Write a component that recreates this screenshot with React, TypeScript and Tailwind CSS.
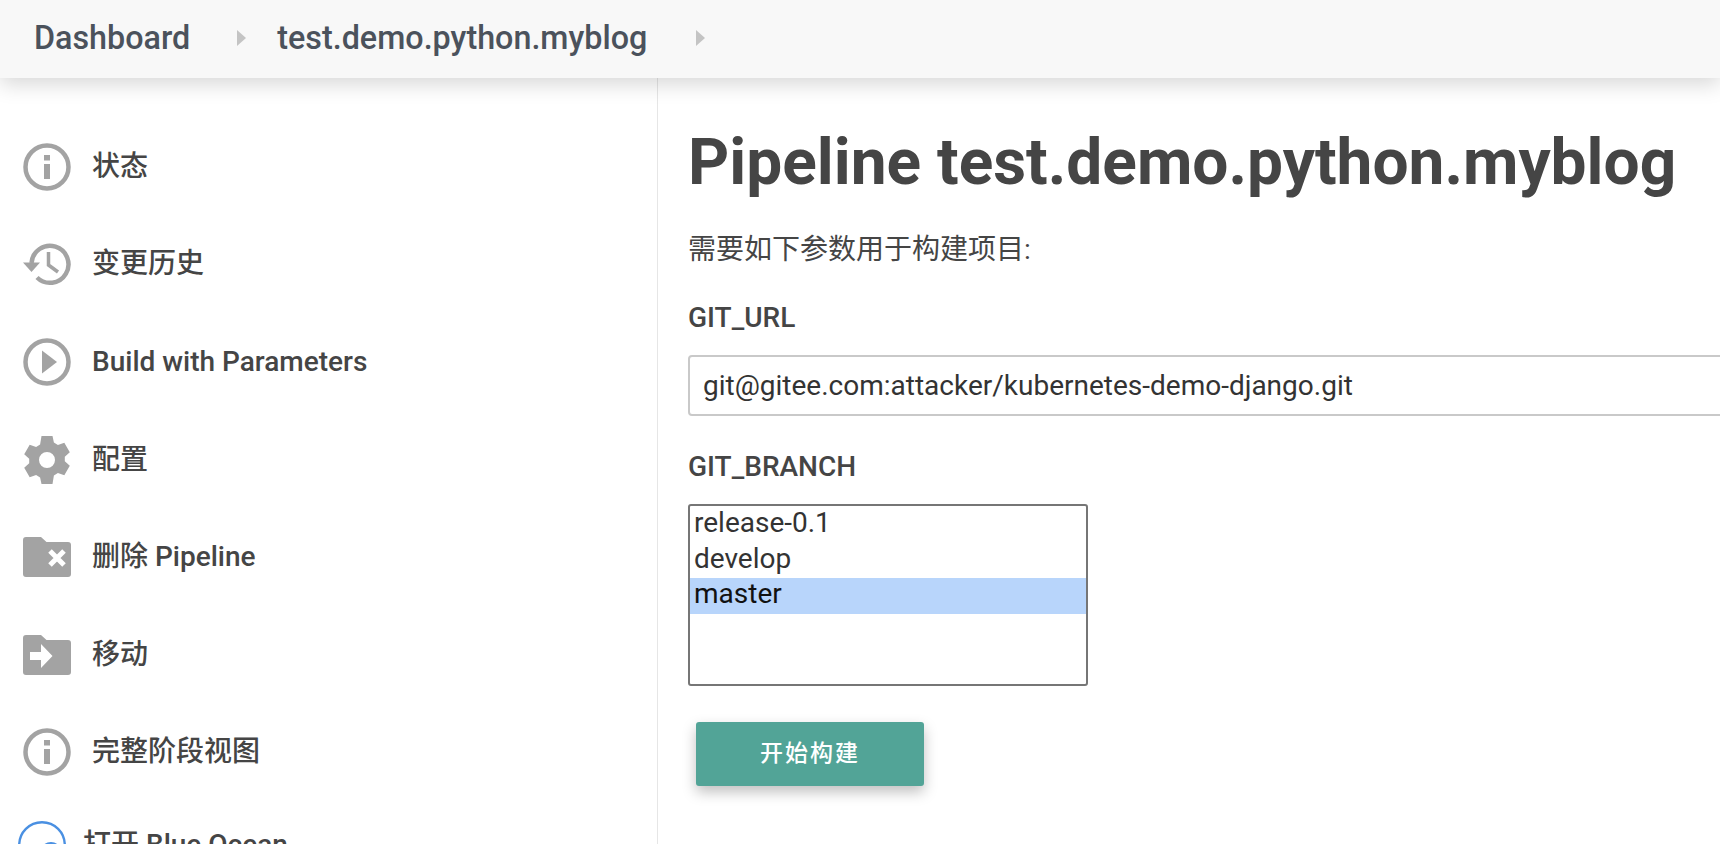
const FONT = "font-['Roboto','Noto_Sans_CJK_SC',sans-serif]";

function InfoIcon() {
  return (
    <svg viewBox="0 0 48 48" className="h-12 w-12 shrink-0">
      <circle cx="24" cy="24" r="21.500" fill="none" stroke="#a3a3a3" strokeWidth="4.500" />
      <rect x="21" y="12" width="6" height="5.500" fill="#a3a3a3" />
      <rect x="21" y="21" width="6" height="15" fill="#a3a3a3" />
    </svg>
  );
}

function HistoryIcon() {
  return (
    <svg viewBox="0 0 48 48" className="h-12 w-12 shrink-0">
      <path d="M8.500 23A18.500 18.500 0 1 1 14 37.500" fill="none" stroke="#a3a3a3" strokeWidth="4.500" />
      <path d="M0 22.500h17L8.500 32z" fill="#a3a3a3" />
      <path d="M25.500 12v13l9.500 7" fill="none" stroke="#a3a3a3" strokeWidth="3.500" />
    </svg>
  );
}

function PlayIcon() {
  return (
    <svg viewBox="0 0 48 48" className="h-12 w-12 shrink-0">
      <circle cx="24" cy="24" r="21.500" fill="none" stroke="#a3a3a3" strokeWidth="4.500" />
      <path d="M19 12.500 34 24 19 35.500z" fill="#a3a3a3" />
    </svg>
  );
}

function GearIcon() {
  return (
    <svg viewBox="0 0 48 48" className="h-12 w-12 shrink-0">
      <path
        fillRule="evenodd"
        d="M18.500 0h11l1.400 6.600 4 2.300 6.400-2.100 5.500 9.500-5 4.500v4.400l5 4.500-5.500 9.500-6.400-2.100-4 2.300L29.500 48h-11l-1.400-6.600-4-2.300-6.400 2.100L1.200 31.700l5-4.500v-4.400l-5-4.500L6.700 8.800l6.400 2.100 4-2.300zM24 16a8 8 0 1 0 0 16 8 8 0 0 0 0-16z"
        fill="#a3a3a3"
      />
    </svg>
  );
}

function FolderIcon({ mark }: { mark: "x" | "arrow" }) {
  return (
    <svg viewBox="0 0 48 40" className="h-10 w-12 shrink-0">
      <path
        d="M3 0h15l5.500 5H45a3 3 0 0 1 3 3v29a3 3 0 0 1-3 3H3a3 3 0 0 1-3-3V3a3 3 0 0 1 3-3z"
        fill="#a3a3a3"
      />
      {mark === "x" ? (
        <path d="M27 14l14 14M41 14 27 28" stroke="#fff" strokeWidth="5" fill="none" />
      ) : (
        <path d="M7 17h11v-8l11.500 12L18 33v-8H7z" fill="#fff" />
      )}
    </svg>
  );
}

function OceanIcon() {
  return (
    <svg viewBox="0 0 48 48" className="h-12 w-12 shrink-0">
      <circle cx="24" cy="24" r="22.800" fill="none" stroke="#4a90e2" strokeWidth="2.400" />
      <path d="M20 36c1-9 6-15 13-15s11 6 11 15z" fill="#4a90e2" />
    </svg>
  );
}

function Crumb({ label }: { label: string }) {
  return <span className="text-[32.300px] leading-none font-medium text-[#4b525c]">{label}</span>;
}

function Caret() {
  return (
    <svg viewBox="0 0 9 16" className="h-4 w-[9px]">
      <path d="M0 0l9 8-9 8z" fill="#c4c4c4" />
    </svg>
  );
}

function NavItem({ icon, label }: { icon: React.ReactNode; label: string }) {
  return (
    <li className="flex h-[97.600px] items-center gap-[21px] pl-[23px]">
      <span className="flex w-12 items-center justify-center">{icon}</span>
      <span className="text-[28px] leading-none font-medium text-[#454545]">{label}</span>
    </li>
  );
}

const branches = ["release-0.1", "develop", "master"];

export default function App() {
  return (
    <div className={`flex h-screen flex-col overflow-hidden bg-white ${FONT}`}>
      <header className="z-10 flex h-[78px] shrink-0 items-center bg-[#f8f8f8] pb-[2px] pl-[34px] shadow-[0_6px_20px_rgba(0,0,0,0.16)]">
        <Crumb label="Dashboard" />
        <div className="ml-[47px] mr-[31px]">
          <Caret />
        </div>
        <Crumb label="test.demo.python.myblog" />
        <div className="ml-[49px]">
          <Caret />
        </div>
      </header>

      <div className="flex min-h-0 flex-1">
        <aside className="w-[658px] shrink-0 border-r border-[#e6e6e6] pt-[40px]">
          <ul>
            <NavItem icon={<InfoIcon />} label="状态" />
            <NavItem icon={<HistoryIcon />} label="变更历史" />
            <NavItem icon={<PlayIcon />} label="Build with Parameters" />
            <NavItem icon={<GearIcon />} label="配置" />
            <NavItem icon={<FolderIcon mark="x" />} label="删除 Pipeline" />
            <NavItem icon={<FolderIcon mark="arrow" />} label="移动" />
            <NavItem icon={<InfoIcon />} label="完整阶段视图" />
            <li className="-ml-[5px] -mt-[5px] flex h-[97.600px] items-center gap-[17px] pl-[23px]">
              <OceanIcon />
              <span className="text-[28px] leading-none font-medium text-[#454545]">打开 Blue Ocean</span>
            </li>
          </ul>
        </aside>

        <main className="min-w-0 flex-1 pl-[30px] pt-[46px] text-[#454545]">
          <h1 className="text-[64px] leading-[78px] font-bold whitespace-nowrap">Pipeline test.demo.python.myblog</h1>
          <p className="mt-[31px] text-[28px] leading-[34px]">需要如下参数用于构建项目:</p>
          <label className="mt-[34px] block text-[28px] leading-[34px] font-medium">GIT_URL</label>
          <div className="mt-[20px] flex h-[61px] w-[1300px] items-center rounded-[4px] border-2 border-[#c9c9c9] pl-[13px] text-[28px] text-[#333]">
            git@gitee.com:attacker/kubernetes-demo-django.git
          </div>
          <label className="mt-[34px] block text-[28px] leading-[34px] font-medium">GIT_BRANCH</label>
          <div className="mt-[20px] h-[182px] w-[400px] rounded-[3px] border-2 border-[#767676] py-px">
            {branches.map((b) => (
              <div
                key={b}
                className={`h-[35.700px] pl-[4px] text-[28px] leading-[31px] ${
                  b === "master" ? "bg-[#b8d5fb] text-[#111]" : "text-[#333]"
                }`}
              >
                {b}
              </div>
            ))}
          </div>
          <button className="ml-[8px] mt-[36px] flex h-[64px] w-[228px] items-center justify-center rounded-[3px] bg-[#52a497] text-[23px] font-medium tracking-[2px] text-white shadow-[0_6px_14px_rgba(0,0,0,0.25)]">
            开始构建
          </button>
        </main>
      </div>
    </div>
  );
}
